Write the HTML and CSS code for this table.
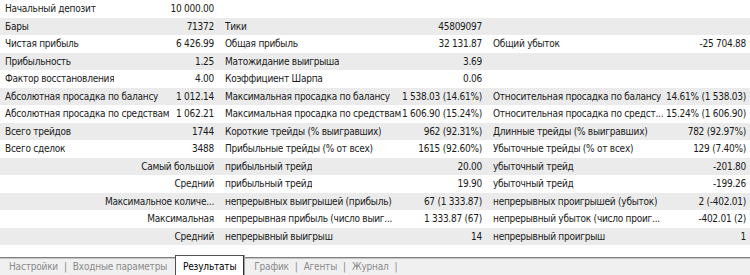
FILE: index.html
```html
<!DOCTYPE html>
<html lang="ru">
<head>
<meta charset="utf-8">
<title>Результаты</title>
<link rel="stylesheet" href="styles.css">
</head>
<body>
<div class="report">
  <div class="row">
    <div class="g1"><span class="lbl">Начальный депозит</span><span class="val">10 000.00</span></div>
    <div class="g2"></div>
    <div class="g3"></div>
  </div>
  <div class="row">
    <div class="g1"><span class="lbl">Бары</span><span class="val">71372</span></div>
    <div class="g2"><span class="lbl">Тики</span><span class="val">45809097</span></div>
    <div class="g3"></div>
  </div>
  <div class="row">
    <div class="g1"><span class="lbl">Чистая прибыль</span><span class="val">6 426.99</span></div>
    <div class="g2"><span class="lbl">Общая прибыль</span><span class="val">32 131.87</span></div>
    <div class="g3"><span class="lbl">Общий убыток</span><span class="val">-25 704.88</span></div>
  </div>
  <div class="row">
    <div class="g1"><span class="lbl">Прибыльность</span><span class="val">1.25</span></div>
    <div class="g2"><span class="lbl">Матожидание выигрыша</span><span class="val">3.69</span></div>
    <div class="g3"></div>
  </div>
  <div class="row">
    <div class="g1"><span class="lbl">Фактор восстановления</span><span class="val">4.00</span></div>
    <div class="g2"><span class="lbl">Коэффициент Шарпа</span><span class="val">0.06</span></div>
    <div class="g3"></div>
  </div>
  <div class="row">
    <div class="g1"><span class="lbl">Абсолютная просадка по балансу</span><span class="val">1 012.14</span></div>
    <div class="g2"><span class="lbl">Максимальная просадка по балансу</span><span class="val">1 538.03 (14.61%)</span></div>
    <div class="g3"><span class="lbl">Относительная просадка по балансу</span><span class="val">14.61% (1 538.03)</span></div>
  </div>
  <div class="row">
    <div class="g1"><span class="lbl">Абсолютная просадка по средствам</span><span class="val">1 062.21</span></div>
    <div class="g2"><span class="lbl">Максимальная просадка по средствам</span><span class="val">1 606.90 (15.24%)</span></div>
    <div class="g3"><span class="lbl">Относительная просадка по средст...</span><span class="val">15.24% (1 606.90)</span></div>
  </div>
  <div class="row">
    <div class="g1"><span class="lbl">Всего трейдов</span><span class="val">1744</span></div>
    <div class="g2"><span class="lbl">Короткие трейды (% выигравших)</span><span class="val">962 (92.31%)</span></div>
    <div class="g3"><span class="lbl">Длинные трейды (% выигравших)</span><span class="val">782 (92.97%)</span></div>
  </div>
  <div class="row">
    <div class="g1"><span class="lbl">Всего сделок</span><span class="val">3488</span></div>
    <div class="g2"><span class="lbl">Прибыльные трейды (% от всех)</span><span class="val">1615 (92.60%)</span></div>
    <div class="g3"><span class="lbl">Убыточные трейды (% от всех)</span><span class="val">129 (7.40%)</span></div>
  </div>
  <div class="row">
    <div class="g1 head"><span class="val">Самый большой</span></div>
    <div class="g2"><span class="lbl">прибыльный трейд</span><span class="val">20.00</span></div>
    <div class="g3"><span class="lbl">убыточный трейд</span><span class="val">-201.80</span></div>
  </div>
  <div class="row">
    <div class="g1 head"><span class="val">Средний</span></div>
    <div class="g2"><span class="lbl">прибыльный трейд</span><span class="val">19.90</span></div>
    <div class="g3"><span class="lbl">убыточный трейд</span><span class="val">-199.26</span></div>
  </div>
  <div class="row">
    <div class="g1 head"><span class="val">Максимальное количе...</span></div>
    <div class="g2"><span class="lbl">непрерывных выигрышей (прибыль)</span><span class="val">67 (1 333.87)</span></div>
    <div class="g3"><span class="lbl">непрерывных проигрышей (убыток)</span><span class="val">2 (-402.01)</span></div>
  </div>
  <div class="row">
    <div class="g1 head"><span class="val">Максимальная</span></div>
    <div class="g2"><span class="lbl">непрерывная прибыль (число выиг...</span><span class="val">1 333.87 (67)</span></div>
    <div class="g3"><span class="lbl">непрерывный убыток (число проиг...</span><span class="val">-402.01 (2)</span></div>
  </div>
  <div class="row">
    <div class="g1 head"><span class="val">Средний</span></div>
    <div class="g2"><span class="lbl">непрерывный выигрыш</span><span class="val">14</span></div>
    <div class="g3"><span class="lbl">непрерывный проигрыш</span><span class="val">1</span></div>
  </div>
</div>
<div class="tabs">
  <span class="tab">Настройки</span><span class="sep">|</span>
  <span class="tab">Входные параметры</span>
  <span class="tab active">Результаты</span>
  <span class="tab">График</span><span class="sep">|</span>
  <span class="tab">Агенты</span><span class="sep">|</span>
  <span class="tab">Журнал</span><span class="sep">|</span>
</div>
</body>
</html>
```

FILE: styles.css
```css
html, body {
  margin: 0;
  padding: 0;
  background: #ffffff;
}
body {
  width: 750px;
  height: 275px;
  overflow: hidden;
  font-family: "DejaVu Sans Condensed", "DejaVu Sans", sans-serif;
  font-size: 10px;
  letter-spacing: -0.25px;
  color: #1a1a1a;
}
.report {
  display: flex;
  flex-direction: column;
  height: 257px;
}
.row {
  display: grid;
  grid-template-columns: 220px 268px 262px;
  height: 17.5px;
  line-height: 17.5px;
  white-space: nowrap;
}
.row:nth-child(even) {
  background: #ebebeb;
}
.g1, .g2, .g3 {
  display: flex;
  justify-content: space-between;
  gap: 2px;
  overflow: hidden;
}
.g1 { padding: 0 6px 0 5px; }
.g2 { padding: 0 6px 0 5px; gap: 0; }
.g3 { padding: 0 4px 0 5px; }
.lbl {
  flex: 0 1 auto;
  min-width: 0;
  overflow: hidden;
}
.g1.head {
  justify-content: flex-end;
}
.val {
  flex: none;
  text-align: right;
}
.tabs {
  height: 18px;
  background: #f0f0f0;
  border-top: 1px solid #808080;
  box-shadow: inset 0 1px 0 #c4c4c4;
  display: flex;
  align-items: stretch;
  padding-left: 5px;
  color: #8a8a8a;
  line-height: 17px;
  white-space: nowrap;
  letter-spacing: -0.2px;
}
.tab {
  padding: 0 4px;
}
.sep {
  padding: 0 2px;
}
.tab.active {
  background: #ffffff;
  color: #000000;
  margin: -3px 6px 0 4px;
  padding: 2px 7px 0 7px;
  border-left: 1px solid #505050;
  border-right: 1px solid #303030;
  border-top: 1px solid #505050;
  box-shadow: 1px 0 0 #a0a0a0;
}
```
